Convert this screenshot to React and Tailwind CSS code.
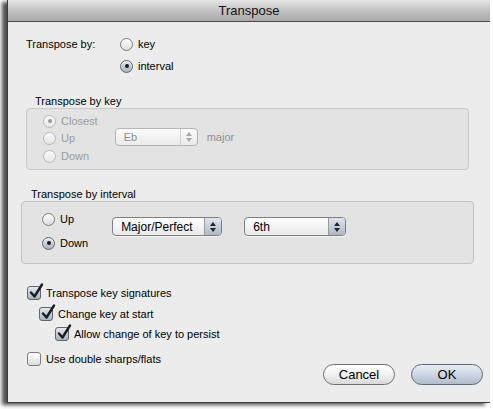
import React from "react";

const Radio = ({ checked, disabled }) => (
  <span
    className={
      "inline-flex items-center justify-center w-[13px] h-[13px] rounded-full border shrink-0 " +
      (disabled
        ? "border-[#b8b8b8] bg-gradient-to-b from-[#fafafa] to-[#e6e6e6]"
        : checked
        ? "border-[#5f6670] bg-gradient-to-b from-[#e4e9f0] to-[#a9b3c1] shadow-[inset_0_1px_1px_rgba(255,255,255,0.8)]"
        : "border-[#7d7d7d] bg-gradient-to-b from-white to-[#dcdcdc]")
    }
  >
    {checked && (
      <span
        className={
          "w-[4px] h-[4px] rounded-full " + (disabled ? "bg-[#9a9a9a]" : "bg-[#1a1a1a]")
        }
      />
    )}
  </span>
);

const RadioRow = ({ label, checked, disabled, h }) => (
  <div className={"flex items-center gap-[5px] " + h}>
    <Radio checked={checked} disabled={disabled} />
    <span className={disabled ? "text-[#9b9b9b]" : "text-black"}>{label}</span>
  </div>
);

const Check = ({ checked }) => (
  <span
    className={
      "relative inline-block w-[14px] h-[14px] rounded-[3px] border shrink-0 " +
      (checked
        ? "border-[#5f6670] bg-gradient-to-b from-[#e4e9f0] to-[#aab4c2]"
        : "border-[#7d7d7d] bg-gradient-to-b from-white to-[#dcdcdc]")
    }
  >
    {checked && (
      <svg
        className="absolute left-[1px] top-[-4px]"
        width="15"
        height="16"
        viewBox="0 0 15 16"
      >
        <path
          d="M2 9.5 L5.5 13.5 L13 1.5"
          fill="none"
          stroke="#1c1c1c"
          strokeWidth="2.4"
          strokeLinecap="round"
          strokeLinejoin="round"
        />
      </svg>
    )}
  </span>
);

const CheckRow = ({ label, checked, pl }) => (
  <div className={"flex items-center gap-[5px] h-[20px] " + pl}>
    <Check checked={checked} />
    <span>{label}</span>
  </div>
);

const Popup = ({ value, w, disabled, h }) => (
  <div
    className={
      "flex items-stretch rounded-[4px] border " +
      w +
      " " +
      h +
      (disabled
        ? " border-[#b5b5b5] bg-gradient-to-b from-[#fbfbfb] to-[#ebebeb] text-[#8f8f8f]"
        : " border-[#7f7f7f] bg-gradient-to-b from-white to-[#e9e9e9] text-black shadow-[0_1px_0_rgba(255,255,255,0.6)]")
    }
  >
    <span className="flex-1 flex items-center pl-[8px]">{value}</span>
    <span
      className={
        "w-[17px] flex flex-col items-center justify-center gap-[2px] border-l rounded-r-[3px] " +
        (disabled
          ? "border-[#d0d0d0]"
          : "border-[#9a9a9a] bg-gradient-to-b from-[#dfe5ee] to-[#aeb8c6]")
      }
    >
      <svg width="6" height="4" viewBox="0 0 6 4">
        <path d="M3 0 L6 4 L0 4 Z" fill={disabled ? "#a8a8a8" : "#222"} />
      </svg>
      <svg width="6" height="4" viewBox="0 0 6 4">
        <path d="M0 0 L6 0 L3 4 Z" fill={disabled ? "#a8a8a8" : "#222"} />
      </svg>
    </span>
  </div>
);

export default function App() {
  return (
    <div
      className="w-[493px] h-[409px] bg-white overflow-hidden text-[11px] leading-[14px] text-black"
      style={{ fontFamily: '"Liberation Sans", Arial, sans-serif' }}
    >
      <div className="ml-[7px] w-[483px] h-[403px] bg-[#ececec] border-b border-l border-[#3c3c3c] shadow-[-5px_2px_4px_rgba(0,0,0,0.7)] flex flex-col">
        {/* title bar */}
        <div className="h-[22px] shrink-0 bg-gradient-to-b from-[#e6e6e6] via-[#c2c2c2] to-[#a9a9a9] border-b border-[#4a4a4a] flex items-center justify-center text-[13px] text-[#111]">
          Transpose
        </div>

        {/* transpose by */}
        <div className="flex pl-[18px] mt-[14px]">
          <div className="w-[94px] h-[16px] flex items-center">Transpose by:</div>
          <div className="flex flex-col">
            <RadioRow label="key" h="h-[16px]" />
            <RadioRow label="interval" checked h="h-[16px] mt-[6px]" />
          </div>
        </div>

        {/* transpose by key */}
        <div className="mt-[20px] pl-[27px] h-[14px]">Transpose by key</div>
        <div className="ml-[18px] w-[443px] h-[62px] rounded-[4px] border border-[#c9c9c9] bg-[#e3e3e3] flex pl-[16px] pt-[4px]">
          <div className="flex flex-col">
            <RadioRow label="Closest" checked disabled h="h-[16px]" />
            <RadioRow label="Up" disabled h="h-[16px] mt-[1px]" />
            <RadioRow label="Down" disabled h="h-[16px] mt-[2px]" />
          </div>
          <div className="flex items-center mt-[15px] ml-[17px] h-[18px] self-start gap-[9px]">
            <Popup value="Eb" w="w-[83px]" h="h-[18px]" disabled />
            <span className="text-[#8f8f8f]">major</span>
          </div>
        </div>

        {/* transpose by interval */}
        <div className="mt-[17px] pl-[23px] h-[14px]">Transpose by interval</div>
        <div className="ml-[13px] w-[453px] h-[63px] rounded-[4px] border border-[#c3c3c3] bg-[#e3e3e3] flex pl-[20px] pt-[9px]">
          <div className="flex flex-col">
            <RadioRow label="Up" h="h-[16px]" />
            <RadioRow label="Down" checked h="h-[16px] mt-[8px]" />
          </div>
          <div className="flex items-center mt-[6px] ml-[24px] self-start gap-[22px] text-[12px]">
            <Popup value="Major/Perfect" w="w-[110px]" h="h-[19px]" />
            <Popup value="6th" w="w-[102px]" h="h-[19px]" />
          </div>
        </div>

        {/* checkboxes */}
        <div className="mt-[19px] flex flex-col">
          <CheckRow label="Transpose key signatures" checked pl="pl-[19px]" />
          <CheckRow label="Change key at start" checked pl="pl-[31px] mt-[1px]" />
          <CheckRow label="Allow change of key to persist" checked pl="pl-[47px] mt-[0px]" />
          <CheckRow label="Use double sharps/flats" pl="pl-[19px] mt-[5px]" />
        </div>

        {/* buttons */}
        <div className="flex justify-end gap-[16px] pr-[7px] mt-[-5px] text-[13px]">
          <button className="w-[72px] h-[21px] rounded-full border border-[#6f6f6f] bg-gradient-to-b from-white via-[#f2f2f2] to-[#d9d9d9] text-black">
            Cancel
          </button>
          <button className="w-[72px] h-[21px] rounded-full border border-[#5d6878] bg-gradient-to-b from-[#e9eef5] via-[#cdd6e2] to-[#b1bccb] text-black">
            OK
          </button>
        </div>
      </div>
    </div>
  );
}
